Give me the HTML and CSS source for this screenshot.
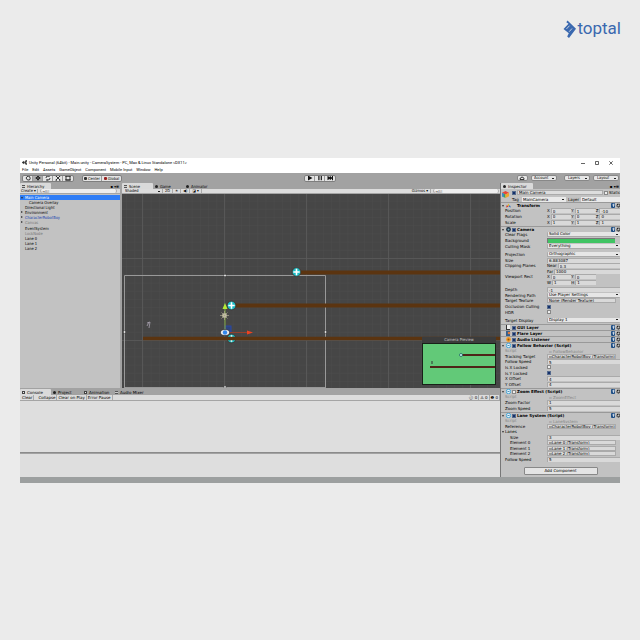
FILE: index.html
```html
<!DOCTYPE html>
<html lang="en">
<head>
<meta charset="utf-8">
<title>Unity Personal - CameraSystem</title>
<link rel="stylesheet" href="styles.css">
</head>
<body>
<svg class="defs" aria-hidden="true">
  <symbol id="help" viewBox="0 0 9 5"><rect x="0" y="0" width="4" height="5" rx="1" fill="#1f4f86"/><path d="M2 1.2h1v1.4H2zM2 3.4h1" stroke="#fff" stroke-width=".7" fill="none"/><circle cx="7.5" cy="2.5" r="1.5" fill="none" stroke="#222" stroke-width="1.2" stroke-dasharray="1.2 .4"/></symbol>
  <symbol id="script" viewBox="0 0 5 5"><circle cx="2.5" cy="2.5" r="2.2" fill="#e8f4fa" stroke="#45a5d5"/><path d="M1.5 2.5h2" stroke="#2475a5" stroke-width=".8"/></symbol>
  <symbol id="orb" viewBox="0 0 10 10"><circle cx="5" cy="5" r="4.4" fill="#19bcc4" stroke="#482c27" stroke-width=".8"/><path d="M5 1.8v6.4M1.8 5h6.4" stroke="#fff" stroke-width="1.6"/></symbol>
</svg>

<header class="brand">
  <svg class="brand-mark" viewBox="0 0 13 20" aria-hidden="true"><path d="M4.500 1.500 13 9.700 6 19 4.200 17.500l1.600-3.200L.5 10 5.500 4.800 3.300 3.300z" fill="#3a68af"/><path d="M3.500 9.900 6.500 6.700M6.200 12.700 9 9.500" fill="none" stroke="#ebebeb" stroke-width=".8"/></svg>
  <span>toptal</span>
</header>

<main class="window">
  <div class="titlebar">
    <svg class="unity" viewBox="0 0 6 6" aria-hidden="true"><path d="M0 3 2 1v1.2h1.3L4.5.4 6 .2 5.6 2 5 3l.6 1L6 5.8l-1.7-.3-1-1.7H2V5z" fill="#111"/><path d="m3.3 3 1.7-1.500M3.300 3 5 4.500M3.300 3H2" stroke="#fff" stroke-width=".4"/></svg>
    <h1>Unity Personal (64bit) - Main.unity - CameraSystem - PC, Mac &amp; Linux Standalone &lt;DX11&gt;</h1>
    <button class="wc" aria-label="Minimize"><svg viewBox="0 0 4 4"><path d="M0 2.500h4"/></svg></button>
    <button class="wc" aria-label="Maximize"><svg viewBox="0 0 4 4"><path d="M.5.500h3v3h-3z"/></svg></button>
    <button class="wc" aria-label="Close"><svg viewBox="0 0 4 4"><path d="m.3.300 3.400 3.400M3.700.300.300 3.700"/></svg></button>
  </div>
  <nav class="menu"><a href="#">File</a><a href="#">Edit</a><a href="#">Assets</a><a href="#">GameObject</a><a href="#">Component</a><a href="#">Mobile Input</a><a href="#">Window</a><a href="#">Help</a></nav>

  <div class="toolbar">
    <div class="side">
      <div class="group tools">
        <button aria-label="Hand"><svg viewBox="0 0 8 6"><path d="M2 3q1-2 2.500-1.700Q6 1 6.200 3.500L5.500 5h-2z"/></svg></button>
        <button class="on" aria-label="Move"><svg viewBox="0 0 8 6"><path d="M4 .5v5M1.500 3h5M3 1.500h2M3 4.500h2M2.500 2v2M5.500 2v2"/></svg></button>
        <button aria-label="Rotate"><svg viewBox="0 0 8 6"><path d="M2 3q0-2 2-2h1.500M6 3q0 2-2 2H2.500M5 .3v1.500M3 4.200v1.500"/></svg></button>
        <button aria-label="Scale"><svg viewBox="0 0 8 6"><path d="m2 1 4 4M6 1 2 5M1.500.8h1.500M5 .8h1.500M1.500 5.200H3M5 5.200h1.500"/></svg></button>
        <button aria-label="Rect"><svg viewBox="0 0 8 6"><path d="M2 1h4v4H2zM1 1h6M1 5h6"/></svg></button>
      </div>
      <div class="group pivot"><button><i class="dot"></i>Center</button><button><i class="dot red"></i>Global</button></div>
    </div>
    <div class="group play">
      <button aria-label="Play"><svg viewBox="0 0 8 6"><path class="fill" d="m2 .5 4.500 2.500L2 5.500z"/></svg></button>
      <button aria-label="Pause"><svg viewBox="0 0 8 6"><path class="fill" d="M2.300.800h1.200v4.400H2.300zM4.700.800h1.200v4.400H4.700z"/></svg></button>
      <button aria-label="Step"><svg viewBox="0 0 8 6"><path class="fill" d="m1.500.8 2.300 1.500V.8L6 2.500V.800h1v4.400H6V3.500L3.800 5.200V3.700L1.500 5.200z"/></svg></button>
    </div>
    <div class="side right">
      <button class="pill cloud" aria-label="Cloud"><svg viewBox="0 0 8 6"><path d="M2 4.500Q1.500 3 3 3q.5-2 2-.5 1.500.500 1 2z"/></svg></button>
      <select class="pill account" aria-label="Account"><option>Account</option></select>
      <select class="pill" aria-label="Layers"><option>Layers</option></select>
      <select class="pill" aria-label="Layout"><option>Layout</option></select>
    </div>
  </div>

  <div class="work">
    <div class="left">
      <div class="upper">
        <section class="hierarchy">
          <div class="tabs"><button class="tab on h-tab"><i class="ic lines"></i>Hierarchy</button><span class="more">▪ ▾≡</span></div>
          <div class="strip"><button>Create ▾</button><input class="search" aria-label="Search hierarchy" value="⌕▾All"></div>
          <ul class="tree">
            <li class="sel open">Main Camera</li><li class="child">Camera Overlay</li><li>Directional Light</li><li class="shut">Environment</li><li class="shut prefab">CharacterRobotBoy</li><li class="shut dim">Canvas</li><li>EventSystem</li><li class="dim">LockNode</li><li>Lane 0</li><li>Lane 1</li><li>Lane 2</li>
          </ul>
        </section>
        <section class="scene">
          <div class="tabs"><button class="tab on s-tab"><i class="ic lines"></i>Scene</button><button class="tab s-tab"><i class="ic disc"></i>Game</button><button class="tab s-tab"><i class="ic disc"></i>Animator</button></div>
          <div class="strip">
            <select class="shade" aria-label="Shading"><option>Shaded</option></select>
            <button>2D</button><button>☀</button><button>◀)</button><button>◪ ▾</button><span class="grow"></span><button>Gizmos ▾</button><input class="search giz" aria-label="Search scene" value="⌕▾All">
          </div>
          <div class="view">
            <svg class="canvas" viewBox="0 0 378 194" preserveAspectRatio="xMinYMin slice" role="img" aria-label="Scene view">
              <defs>
                <pattern id="minor" x="20.500" y="-18" width="8.200" height="8.200" patternUnits="userSpaceOnUse"><path d="M.25 0v8.200M0 .25h8.200" stroke="#4d4d4d" stroke-width=".5"/></pattern>
                <pattern id="major" x="20" y="-18" width="82" height="82" patternUnits="userSpaceOnUse"><path d="M.5 0v82M0 .5h82" stroke="#5a5a5a" stroke-width=".8"/></pattern>
              </defs>
              <rect width="378" height="194" fill="#464646"/>
              <rect width="378" height="194" fill="url(#minor)"/>
              <rect width="378" height="194" fill="url(#major)"/>
              <path d="M2.500 194V81.500h201V194M2.500 193.500h201" fill="none" stroke="#999"/>
              <path d="M175 78.500h203M110 111.500h268" stroke="#5b3410" stroke-width="4"/>
              <use href="#orb" x="169.500" y="73" width="10" height="10"/>
              <use href="#orb" x="104.500" y="106.500" width="10" height="10"/>
              <use href="#orb" x="104.500" y="139.500" width="10" height="10"/>
              <path d="M21 144.500h357" stroke="#5b3410" stroke-width="3.500"/>
              <rect x="103" y="132" width="6" height="6" fill="#30447c" stroke="#2848a8"/>
              <path d="M103 138v-24" stroke="#80a740"/><path d="m103 109 2.500 6h-5z" fill="#b5ec36"/>
              <path d="M103 138.500h23" stroke="#94402d"/><path d="m131 138.500-6-2v4z" fill="#f04321"/>
              <circle cx="102.500" cy="121.500" r="2.300" fill="#e8e4c5"/><path d="M102.500 117v9M98 121.500h9M99.500 118.500l6 6M105.500 118.500l-6 6" stroke="#ada98f" stroke-width=".7"/>
              <ellipse cx="103" cy="138.500" rx="4.500" ry="3" fill="#eee" stroke="#222" stroke-width=".6"/><circle cx="103" cy="138.500" r="2.200" fill="#3387ec"/>
              <path d="m25 132 2-4M27 134l1-6M25 129l3-1" stroke="#a9a2b0" stroke-width=".8"/>
              <g fill="#fff" stroke="#222" stroke-width=".5"><circle cx="103" cy="81.500" r="1.200"/><circle cx="2.500" cy="138" r="1.200"/><circle cx="203.500" cy="138" r="1.200"/><circle cx="103" cy="193" r="1.200"/></g>
            </svg>
            <figure class="preview">
              <figcaption>Camera Preview</figcaption>
              <svg viewBox="0 0 72 40" aria-hidden="true"><rect width="72" height="40" fill="#62c978"/><path d="M39 11h33M7 23h65" stroke="#222a18" stroke-width="2"/><path d="M40 11h32M7 23h65" stroke="#7a2118" stroke-width="1.200"/><circle cx="38" cy="11" r="1.500" fill="#d6fafa" stroke="#18635f" stroke-width=".8"/><path d="M9 17v3" stroke="#333"/></svg>
            </figure>
          </div>
        </section>
      </div>
      <section class="console">
        <div class="tabs"><button class="tab on c-tab"><i class="ic page"></i>Console</button><button class="tab c-tab"><i class="ic disc"></i>Project</button><button class="tab c-tab"><i class="ic page"></i>Animation</button><button class="tab c-tab"><i class="ic lines"></i>Audio Mixer</button></div>
        <div class="strip"><button>Clear</button><i class="sp"></i><button>Collapse</button><button>Clear on Play</button><button>Error Pause</button><span class="grow"></span><button>ⓘ 0</button><button>⚠ 0</button><button>❶ 0</button></div>
        <div class="log"></div>
        <div class="detail"></div>
      </section>
    </div>

    <aside class="inspector">
      <div class="tabs"><button class="tab on i-tab"><i class="ic disc"></i>Inspector</button><span class="more">▪ ▾≡</span></div>
      <div class="object">
        <svg class="cube" viewBox="0 0 8 8" aria-hidden="true"><path d="m4 0 4 2-4 2-4-2z" fill="#e8453a"/><path d="m0 2 4 2v4L0 6z" fill="#3fa552"/><path d="m8 2-4 2v4l4-2z" fill="#f0a52c"/><path d="m0 2 2 1v4L0 6z" fill="#3a87d8"/></svg>
        <div class="orow"><input type="checkbox" checked aria-label="Active"><input class="name" value="Main Camera" aria-label="Name"><label class="static"><input type="checkbox">Static<i class="arrow"></i></label></div>
        <div class="orow tagrow"><label for="tag">Tag</label><select id="tag"><option>MainCamera</option></select><label for="layer">Layer</label><select id="layer" class="lay"><option>Default</option></select></div>
      </div>

      <section class="comp">
        <h2 class="open"><svg viewBox="0 0 6 5"><path d="m3 0 1.500 3h-3z" fill="#e5b32c"/><path d="m0 5 1-3 2 2z" fill="#d33f2e"/><path d="m6 5-1.500-3-1.500 2z" fill="#3876c8"/></svg><b class="nocheck">Transform</b><svg class="help"><use href="#help"/></svg></h2>
        <div class="rows r3">
          <div class="row"><span>Position</span><div class="vec"><label>X<input value="0"></label><label>Y<input value="1"></label><label>Z<input value="-10"></label></div></div>
          <div class="row"><span>Rotation</span><div class="vec"><label>X<input value="0"></label><label>Y<input value="0"></label><label>Z<input value="0"></label></div></div>
          <div class="row"><span>Scale</span><div class="vec"><label>X<input value="1"></label><label>Y<input value="1"></label><label>Z<input value="1"></label></div></div>
        </div>
      </section>

      <section class="comp camera">
        <h2 class="open"><svg viewBox="0 0 5 5"><circle cx="2.500" cy="2.500" r="2.400" fill="#234"/><circle cx="2.500" cy="2.500" r="1" fill="#7ab"/></svg><label><input type="checkbox" checked>Camera</label><svg class="help"><use href="#help"/></svg></h2>
        <div class="rows r3">
          <div class="row"><label for="cf">Clear Flags</label><select id="cf"><option>Solid Color</option></select></div>
          <div class="row"><label for="bg">Background</label><button id="bg" class="swatch" aria-label="Background color"></button></div>
          <div class="row"><label for="cm">Culling Mask</label><select id="cm"><option>Everything</option></select></div>
        </div>
        <div class="rows r6">
          <div class="row"><label for="pj">Projection</label><select id="pj"><option>Orthographic</option></select></div>
          <div class="row"><label for="sz">Size</label><input id="sz" value="6.883087"></div>
          <div class="row"><span>Clipping Planes</span><label class="clip">Near<input value="0.3"></label></div>
          <div class="row"><span></span><label class="clip">Far<input value="1000"></label></div>
          <div class="row"><span>Viewport Rect</span><div class="vec"><label>X<input value="0"></label><label>Y<input value="0"></label><i></i></div></div>
          <div class="row"><span></span><div class="vec"><label>W<input value="1"></label><label>H<input value="1"></label><i></i></div></div>
        </div>
        <div class="rows r5">
          <div class="row"><label for="dp">Depth</label><input id="dp" value="-1"></div>
          <div class="row"><label for="rp">Rendering Path</label><select id="rp"><option>Use Player Settings</option></select></div>
          <div class="row"><label for="tt">Target Texture</label><input id="tt" class="obj" value="None (Render Texture)"></div>
          <div class="row"><label for="oc">Occlusion Culling</label><input type="checkbox" id="oc" checked></div>
          <div class="row"><label for="hd">HDR</label><input type="checkbox" id="hd"></div>
        </div>
        <div class="rows"><div class="row one"><label for="td">Target Display</label><select id="td"><option>Display 1</option></select></div></div>
      </section>

      <section class="comp"><h2><svg viewBox="0 0 5 5"><rect x="1" width="3" height="5" fill="#eee"/><path d="M1 0v4h3v1H0V0z" fill="#333"/></svg><label><input type="checkbox" checked>GUI Layer</label><svg class="help"><use href="#help"/></svg></h2></section>
      <section class="comp"><h2><svg viewBox="0 0 5 5"><rect width="4" height="5" fill="#345f8d"/><circle cx="3" cy="2" r="1.300" fill="#df793d"/></svg><label><input type="checkbox" checked>Flare Layer</label><svg class="help"><use href="#help"/></svg></h2></section>
      <section class="comp"><h2><svg viewBox="0 0 5 5"><circle cx="2.500" cy="2.500" r="2.400" fill="#f49a22"/><circle cx="2.500" cy="2.500" r="1" fill="#965310"/></svg><label><input type="checkbox" checked>Audio Listener</label><svg class="help"><use href="#help"/></svg></h2></section>

      <section class="comp">
        <h2 class="open"><svg><use href="#script"/></svg><label><input type="checkbox" checked>Follow Behavior (Script)</label><svg class="help"><use href="#help"/></svg></h2>
        <div class="rows r7">
          <div class="row off"><label for="s1">Script</label><input id="s1" class="ref" value="▫ FollowBehavior" disabled></div>
          <div class="row"><label for="trk">Tracking Target</label><input id="trk" class="obj" value="▫CharacterRobotBoy (Transform)"></div>
          <div class="row"><label for="fs">Follow Speed</label><input id="fs" value="5"></div>
          <div class="row"><label for="xl">Is X Locked</label><input type="checkbox" id="xl"></div>
          <div class="row"><label for="yl">Is Y Locked</label><input type="checkbox" id="yl" checked></div>
          <div class="row"><label for="xo">X Offset</label><input id="xo" value="4"></div>
          <div class="row"><label for="yo">Y Offset</label><input id="yo" value="4"></div>
        </div>
      </section>

      <section class="comp">
        <h2 class="open"><svg><use href="#script"/></svg><label><input type="checkbox">Zoom Effect (Script)</label><svg class="help"><use href="#help"/></svg></h2>
        <div class="rows r3">
          <div class="row off"><label for="s2">Script</label><input id="s2" class="ref" value="▫ ZoomEffect" disabled></div>
          <div class="row"><label for="zf">Zoom Factor</label><input id="zf" value="1"></div>
          <div class="row"><label for="zs">Zoom Speed</label><input id="zs" value="5"></div>
        </div>
      </section>

      <section class="comp">
        <h2 class="open"><svg><use href="#script"/></svg><label><input type="checkbox" checked>Lane System (Script)</label><svg class="help"><use href="#help"/></svg></h2>
        <div class="rows r8">
          <div class="row off"><label for="s3">Script</label><input id="s3" class="ref" value="▫ LaneSystem" disabled></div>
          <div class="row"><label for="rf">Reference</label><input id="rf" class="obj" value="▫CharacterRobotBoy (Transform)"></div>
          <div class="row fold"><span>Lanes</span></div>
          <div class="row in"><label for="ls">Size</label><input id="ls" value="3"></div>
          <div class="row in"><label for="e0">Element 0</label><input id="e0" class="obj" value="▫Lane 0 (Transform)"></div>
          <div class="row in"><label for="e1">Element 1</label><input id="e1" class="obj" value="▫Lane 1 (Transform)"></div>
          <div class="row in"><label for="e2">Element 2</label><input id="e2" class="obj" value="▫Lane 2 (Transform)"></div>
          <div class="row"><label for="fs2">Follow Speed</label><input id="fs2" value="5"></div>
        </div>
      </section>
      <button class="add">Add Component</button>
    </aside>
  </div>
  <footer class="status"></footer>
</main>
</body>
</html>
```

FILE: styles.css
```css
* { box-sizing: border-box; margin: 0; padding: 0; }
body { background: #ebebeb; color: #000; font: 4px/5px "DejaVu Sans Condensed", "DejaVu Sans", sans-serif; }
button, input, select { font: inherit; color: inherit; border: 0; background: none; appearance: none; min-width: 0; border-radius: 0; }
svg { display: block; }
i { font-style: normal; }
a { color: inherit; text-decoration: none; }
.defs { position: absolute; width: 0; height: 0; }

.brand { display: flex; justify-content: flex-end; align-items: center; gap: 1px; padding: 17px 19px 0 0; height: 40px; margin-bottom: 118px; color: #3a68af; font: 17px/23px Roboto, "Open Sans", sans-serif; }
.brand-mark { width: 13px; height: 20px; }

.window { margin: 0 20px; background: #a2a2a2; overflow: hidden; }
.titlebar { display: flex; align-items: center; height: 9px; padding: 0 2px; background: #fff; font-family: Roboto, sans-serif; }
.titlebar h1 { flex: 1; font-size: 4px; font-weight: 400; }
.unity { width: 5px; height: 5px; margin-right: 2px; }
.wc { width: 14px; height: 6px; }
.wc svg { width: 4px; height: 4px; margin: 0 auto; fill: none; stroke: #222; stroke-width: .7; }
.menu { display: flex; gap: 4px; height: 6px; padding-left: 2px; background: #fff; font-family: Roboto, sans-serif; }

.toolbar { display: flex; align-items: center; height: 10px; }
.side { flex: 1; display: flex; align-items: center; gap: 8px; padding-left: 2px; }
.side.right { justify-content: flex-end; padding: 0 1px; }
.group { display: flex; height: 7px; border: 1px solid #7e7e7e; border-radius: 2px; background: #e4e4e4; overflow: hidden; }
.group button { display: flex; align-items: center; justify-content: center; height: 5px; border-right: 1px solid #999; }
.group button:last-child { border-right: 0; }
.tools button { width: 10px; }
.tools .on { background: #aaa; }
.group svg, .cloud svg { width: 8px; height: 6px; fill: none; stroke: #222; stroke-width: .9; flex: none; }
.group .fill { fill: #111; stroke: none; }
.pivot button { width: 19px; }
.play button { width: 10px; }
.dot { width: 3px; height: 3px; margin-right: 1px; background: #333; border-radius: 1px; }
.dot.red { background: #922; }
.pill { height: 6px; width: 26px; padding: 0 3px; border: 1px solid #888; border-radius: 2px; background-color: #e6e6e6; line-height: 4px; }
.cloud { width: 11px; padding: 0; display: flex; align-items: center; }
.side.right { gap: 3px; }
.account { margin-right: 4px; padding-left: 2px; }

select { background: #e9e9e9 linear-gradient(#222, #222) no-repeat right 2px center / 2px 1px; }

.work { display: grid; grid-template-columns: minmax(0, 1fr) 120px; }
.left { display: flex; flex-direction: column; }
.upper { flex: 1; display: grid; grid-template-columns: 100px minmax(0, 1fr); column-gap: 2px; padding-bottom: 1px; }
.tabs { display: flex; align-items: flex-end; height: 6px; }
.tab { display: flex; align-items: center; height: 6px; padding-left: 2px; font-size: 4px; white-space: nowrap; }
.tab.on { background: #dadada; border-radius: 1px 1px 0 0; }
.h-tab { width: 31px; }
.s-tab { width: 31px; }
.c-tab { width: 31px; }
.i-tab { width: 32px; }
.ic { width: 3px; height: 3px; margin-right: 2px; flex: none; }
.lines { background: repeating-linear-gradient(#555 0 1px, #ccc 1px 2px); }
.disc { background: #222; border-radius: 50%; }
.page { border: 1px solid #444; background: #eee; }
.more { margin-left: auto; padding-right: 1px; }
.strip { display: flex; align-items: stretch; height: 5px; background: #dcdcdc; border-bottom: 1px solid #a5a5a5; line-height: 4px; }
.strip button { padding: 0 1px; border-right: 1px solid #aaa; line-height: 4px; white-space: nowrap; }
.scene .strip button { padding: 0 2px; }
.strip select { background-color: transparent; border-right: 1px solid #aaa; line-height: 4px; }
.grow { flex: 1; }
.sp { width: 3px; }
.search { width: 77px; margin-left: 2px; border: 1px solid #aaa; border-width: 0 1px; border-radius: 2px; background: #eee; color: #777; line-height: 4px; }
.giz { width: 66px; margin-right: 1px; }

.hierarchy { display: flex; flex-direction: column; background: #c2c2c2; }
.hierarchy .tabs, .scene .tabs, .inspector .tabs { background: #a2a2a2; }
.tree { display: grid; grid-template-rows: repeat(11, 1fr); height: 56px; margin-top: 1px; list-style: none; }
.tree li { display: flex; align-items: center; padding-left: 5px; position: relative; white-space: nowrap; }
.tree .child { padding-left: 9px; }
.tree .sel { background: #2f7df6; color: #fff; }
.tree .prefab { color: #1741b0; }
.tree .dim { color: #777; }
.shut::before, .open::before, .fold::before { content: ""; position: absolute; left: 1px; top: 1px; border: solid transparent; border-width: 1px 0 1px 2px; border-left-color: #333; }
.open::before, .fold::before { border: solid transparent; border-width: 2px 1px 0; border-top-color: #333; top: 2px; }

.scene { display: flex; flex-direction: column; }
.shade { width: 41px; padding-left: 3px; }
.view { position: relative; flex: 1; overflow: hidden; background: #464646; }
.canvas { position: absolute; inset: 0; width: 100%; height: 100%; }
.preview { position: absolute; right: 4px; bottom: 3px; width: 74px; }
.preview figcaption { height: 6px; background: #3c3c3c; color: #ccc; text-align: center; }
.preview svg { width: 100%; border: 1px solid #182018; }

.console { font-family: "DejaVu Sans", sans-serif; }
.console .strip { height: 6px; padding-left: 1px; }
.log { height: 52px; background: #dedede; border-bottom: 1px solid #8b8b8b; }
.detail { height: 23px; margin-top: 1px; background: #dedede; }
.status { height: 6px; background: #9c9f9f; }

.inspector { border-left: 1px solid #777; background: #c2c2c2; padding-bottom: 2px; overflow: hidden; font-family: "DejaVu Sans", sans-serif; }
.object { display: grid; grid-template-columns: 11px 1fr; grid-template-rows: 7px 6px; }
.cube { grid-row: 1 / 3; width: 7px; height: 7px; margin: 2px 1px; }
.orow { display: flex; align-items: center; gap: 1px; }
input[type="checkbox"] { width: 4px; height: 4px; flex: none; border: 1px solid #888; background: #eee; }
input[type="checkbox"]:checked { border-color: #566b8d; background: #15306b; }
.name { flex: 1; height: 5px; padding-left: 1px; border: 1px solid #aaa; background: #ddd; line-height: 3px; }
.static { display: flex; align-items: center; width: 21px; gap: 1px; white-space: nowrap; }
.arrow { border: solid transparent; border-width: 2px 1px 0; border-top-color: #222; }
.tagrow select { width: 44px; height: 5px; padding-left: 1px; line-height: 5px; }
.tagrow .lay { flex: 1; }
.tagrow label { width: 9px; }
.tagrow label + select + label { width: 12px; margin-left: 1px; }

.comp { border-top: 1px solid #999; }
.comp h2 { display: flex; align-items: center; gap: 1px; position: relative; height: 5px; padding-left: 5px; font-size: 4px; font-weight: 700; line-height: 5px; }
.comp h2 svg { width: 5px; height: 5px; flex: none; }
.comp h2 label { flex: 1; display: flex; align-items: center; gap: 1px; white-space: nowrap; }
.comp h2 .help { width: 9px; }
.comp .nocheck { flex: 1; padding-left: 5px; }
.comp.camera { padding-bottom: 1px; }
.comp.camera .rows + .rows { margin-top: 2px; }
.comp.camera .rows + .r6 { margin-top: 3px; }
.rows { display: grid; grid-auto-rows: 1fr; }
.r3 { height: 17px; }
.comp:not(.camera) > .r3 { margin-bottom: 1px; }
.r5 { height: 28px; }
.r6 { height: 33px; }
.r7 { height: 39px; margin-bottom: 1px; }
.r8 { height: 44px; margin-bottom: 1px; }
.one { height: 6px; }
.row { display: grid; grid-template-columns: 42px minmax(0, 1fr); align-items: center; position: relative; padding-left: 4px; white-space: nowrap; }
.row.in > label { padding-left: 5px; }
.row > input:not([type]), .row > select, .vec input, .clip input { height: 5px; padding-left: 1px; border: solid #aaa; border-width: 1px 0 0 1px; background-color: #d9d9d9; line-height: 4px; width: 100%; }
.row > select { background-color: #e6e6e6; border-width: 0 0 1px 1px; border-radius: 1px; }
.row > .obj:not([type]) { width: calc(100% - 4px); border-width: 1px; line-height: 3px; }
.row > .ref:not([type]) { border-color: transparent; background: none; }
.off { color: #858585; }
.vec { display: grid; grid-template-columns: repeat(3, 1fr); }
.vec label { display: flex; align-items: center; gap: 1px; }
.vec input { flex: 1; }
.clip { display: flex; align-items: center; gap: 1px; }
.clip input { flex: 1; }
.swatch { height: 5px; margin-right: 5px; background: #40c463; border: 1px solid #777; border-width: 1px 0 0 1px; }
.add { display: block; width: 74px; height: 8px; margin: 5px auto 0; border: 1px solid #888; border-radius: 1px; background: #e4e4e4; line-height: 6px; }
```
